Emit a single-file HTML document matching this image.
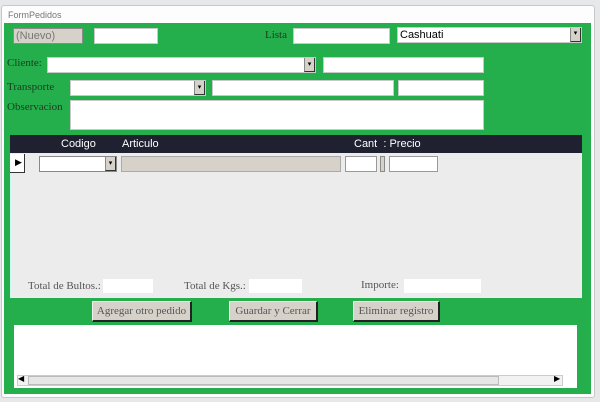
<!DOCTYPE html><html><head><style>
*{box-sizing:border-box;margin:0;padding:0}
body{width:600px;height:402px;background:#e6e8ea;position:relative;overflow:hidden;font-family:"Liberation Serif",serif}
.a{position:absolute}
.w{background:#fff;border:1px solid #c9c9c9}
.g{background:#d6d2ca;border:1px solid #8a8a8a}
.l{font-size:11px;color:#1f3a1f}
.dd{position:absolute;right:0;top:0;bottom:0;width:11px;background:#d6d2ca;border-left:1px solid #888;border-right:1px solid #333;border-bottom:1px solid #333;font-size:7px;text-align:center;line-height:12px;color:#000}
.b{background:#d6d2ca;border:1px solid #eee;border-right:2px solid #222;border-bottom:2px solid #222;font-size:11px;color:#555;text-align:center;line-height:18px}
.h{color:#fff;font-family:"Liberation Sans",sans-serif;font-size:11px;top:138px}
</style></head><body>
<div class="a" style="left:1px;top:5px;width:594px;height:393px;background:#fdfdfd;border:1px solid #c8c8c8;border-radius:3px"></div>
<div class="a" style="left:8px;top:10px;font-family:'Liberation Sans',sans-serif;font-size:9px;color:#777">FormPedidos</div>
<div class="a" style="left:4px;top:23px;width:587px;height:371px;background:#25ae4c"></div>
<div class="a g" style="left:13px;top:28px;width:70px;height:16px;font-family:'Liberation Sans',sans-serif;font-size:11px;color:#777;padding-left:2px;line-height:14px">(Nuevo)</div>
<div class="a w" style="left:94px;top:28px;width:64px;height:16px"></div>
<div class="a l" style="left:265px;top:29px">Lista</div>
<div class="a w" style="left:293px;top:28px;width:97px;height:16px"></div>
<div class="a w" style="left:397px;top:27px;width:185px;height:16px;font-family:'Liberation Sans',sans-serif;font-size:11px;padding-left:2px;line-height:14px">Cashuati<div class="dd">▾</div></div>
<div class="a l" style="left:7px;top:57px">Cliente:</div>
<div class="a w" style="left:47px;top:57px;width:269px;height:16px"><div class="dd">▾</div></div>
<div class="a w" style="left:323px;top:57px;width:161px;height:16px"></div>
<div class="a l" style="left:7px;top:81px">Transporte</div>
<div class="a w" style="left:70px;top:80px;width:136px;height:16px"><div class="dd">▾</div></div>
<div class="a w" style="left:212px;top:80px;width:182px;height:16px"></div>
<div class="a w" style="left:398px;top:80px;width:86px;height:16px"></div>
<div class="a l" style="left:7px;top:101px">Observacion</div>
<div class="a w" style="left:70px;top:100px;width:414px;height:30px"></div>
<div class="a" style="left:10px;top:135px;width:572px;height:163px;background:#ececec;border:1px solid #cfe"></div>
<div class="a" style="left:10px;top:135px;width:572px;height:18px;background:#1f2130"></div>
<div class="a h" style="left:61px">Codigo</div>
<div class="a h" style="left:122px">Articulo</div>
<div class="a h" style="left:354px">Cant&nbsp; : Precio</div>
<div class="a" style="left:10px;top:154px;width:15px;height:19px;background:#fff;border-right:1px solid #333;border-bottom:1px solid #333;font-size:9px;line-height:17px;padding-left:5px">▶</div>
<div class="a w" style="left:39px;top:156px;width:78px;height:16px;border-color:#888"><div class="dd">▾</div></div>
<div class="a g" style="left:121px;top:156px;width:220px;height:16px;border-color:#aaa"></div>
<div class="a w" style="left:345px;top:156px;width:32px;height:16px;border-color:#999"></div>
<div class="a g" style="left:380px;top:156px;width:5px;height:16px"></div>
<div class="a w" style="left:389px;top:156px;width:49px;height:16px;border-color:#999"></div>
<div class="a l" style="left:28px;top:280px;color:#555">Total de Bultos.:</div>
<div class="a" style="left:103px;top:279px;width:50px;height:14px;background:#fff"></div>
<div class="a l" style="left:184px;top:280px;color:#555">Total de Kgs.:</div>
<div class="a" style="left:249px;top:279px;width:53px;height:14px;background:#fff"></div>
<div class="a l" style="left:361px;top:279px;color:#555">Importe:</div>
<div class="a" style="left:404px;top:279px;width:77px;height:14px;background:#fff"></div>
<div class="a b" style="left:92px;top:301px;width:100px;height:21px">Agregar otro pedido</div>
<div class="a b" style="left:229px;top:301px;width:89px;height:21px">Guardar y Cerrar</div>
<div class="a b" style="left:353px;top:301px;width:87px;height:21px">Eliminar registro</div>
<div class="a" style="left:14px;top:325px;width:563px;height:63px;background:#fff"></div>
<div class="a" style="left:17px;top:375px;width:546px;height:11px;background:#f2f2f2;border:1px solid #ccc"></div>
<div class="a" style="left:28px;top:376px;width:471px;height:9px;background:#e6e6e6;border:1px solid #bbb"></div>
<div class="a" style="left:18px;top:374px;font-size:8px">◀</div>
<div class="a" style="left:554px;top:374px;font-size:8px">▶</div>
</body></html>
